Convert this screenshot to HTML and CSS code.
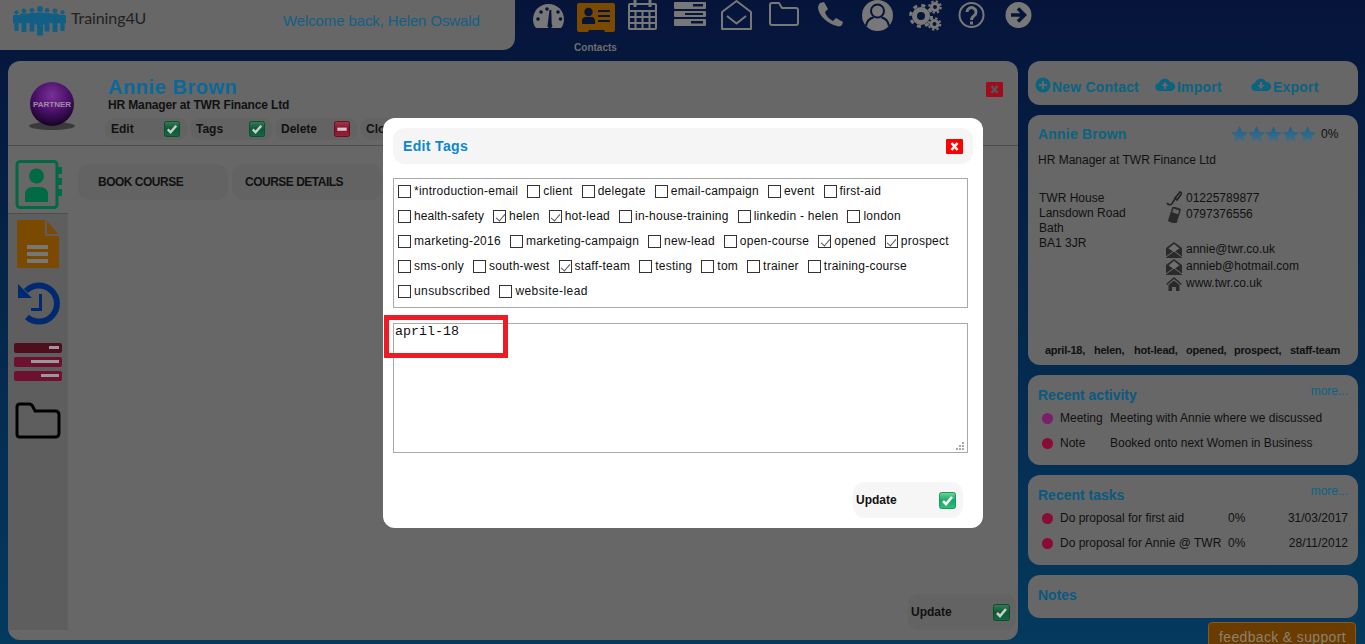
FILE: index.html
```html
<!DOCTYPE html>
<html lang="en">
<head>
<meta charset="utf-8">
<title>Training4U - Contacts</title>
<link rel="stylesheet" href="styles.css">
</head>
<body>
<svg class="defs" width="0" height="0" aria-hidden="true">
  <defs>
    <linearGradient id="g-green" x1="0" y1="0" x2="0" y2="1"><stop offset="0" stop-color="#6fd79a"/><stop offset=".5" stop-color="#16a765"/><stop offset="1" stop-color="#2fc07f"/></linearGradient>
    <linearGradient id="g-green-dim" x1="0" y1="0" x2="0" y2="1"><stop offset="0" stop-color="#3a7a55"/><stop offset=".5" stop-color="#0b5a36"/><stop offset="1" stop-color="#186844"/></linearGradient>
    <linearGradient id="g-red-dim" x1="0" y1="0" x2="0" y2="1"><stop offset="0" stop-color="#a03a4c"/><stop offset=".5" stop-color="#8a1030"/><stop offset="1" stop-color="#96243c"/></linearGradient>
    <linearGradient id="g-star" x1="0" y1="0" x2="0" y2="1"><stop offset="0" stop-color="#17608c"/><stop offset="1" stop-color="#4a6e84"/></linearGradient>
    <radialGradient id="g-ball" cx=".5" cy=".3" r=".7"><stop offset="0" stop-color="#7a3096"/><stop offset=".55" stop-color="#4a1068"/><stop offset="1" stop-color="#150424"/></radialGradient>
    <symbol id="i-ok" viewBox="0 0 17 17"><rect x=".5" y=".5" width="16" height="16" rx="2" fill="url(#g-green)" stroke="#1a9a5e"/><path d="M4 9l3 3 6-7" fill="none" stroke="#fff" stroke-width="2.6"/></symbol>
    <symbol id="i-ok-dim" viewBox="0 0 17 17"><rect x=".5" y=".5" width="16" height="16" rx="2" fill="url(#g-green-dim)" stroke="#0d4d2f"/><path d="M4 9l3 3 6-7" fill="none" stroke="#ccc" stroke-width="2.6"/></symbol>
    <symbol id="i-del-dim" viewBox="0 0 17 17"><rect x=".5" y=".5" width="16" height="16" rx="2" fill="url(#g-red-dim)" stroke="#640c20"/><rect x="3.5" y="7" width="10" height="3.4" fill="#ccc"/></symbol>
    <symbol id="i-x" viewBox="0 0 17 15"><rect width="17" height="15" rx="1" fill="#f00"/><path d="M5.5 4l6 7M11.5 4l-6 7" stroke="#fff" stroke-width="2.6"/></symbol>
    <symbol id="i-x-dim" viewBox="0 0 17 15"><rect width="17" height="15" rx="1" fill="#a00c1c"/><path d="M5.5 4l6 7M11.5 4l-6 7" stroke="#555" stroke-width="2.6"/></symbol>
    <symbol id="i-star" viewBox="0 0 17 17"><path d="M8.5 0l2.5 5.8 6 .6-4.5 4 1.4 6.1-5.4-3.2-5.4 3.2 1.4-6.1L0 6.400l6-.6z" fill="url(#g-star)"/></symbol>
    <symbol id="i-mail" viewBox="0 0 16 16"><path d="M0 6l8-6 8 6v10H0z" fill="#2a2a2a"/><path d="M2.500 6.500L8 2l5.500 4.500L8 10z" fill="#707070"/><path d="M0 15l8-6 8 6" fill="none" stroke="#707070"/></symbol>
    <symbol id="i-person" viewBox="0 0 10 30"><circle cx="5" cy="3.500" r="3" /><path d="M0 8.500q0-1.500 1.500-1.500h7q1.500 0 1.500 1.500V19H8v11H2V19H0z"/></symbol>
  </defs>
</svg>

<header class="topbar">
  <div class="brand">
    <div class="logo">
      <svg class="logo-mark" width="53" height="36" viewBox="0 0 53 36" fill="#125f85" aria-hidden="true">
        <use href="#i-person" x="0" y="8" width="7" height="21"/>
        <use href="#i-person" x="46" y="8" width="7" height="21"/>
        <use href="#i-person" x="7" y="6" width="8" height="24"/>
        <use href="#i-person" x="38" y="6" width="8" height="24"/>
        <use href="#i-person" x="15" y="4" width="8" height="27"/>
        <use href="#i-person" x="30" y="4" width="8" height="27"/>
        <use href="#i-person" x="22" y="2" width="10" height="33"/>
      </svg>
      <span class="logo-text">Training4U</span>
    </div>
    <span class="welcome">Welcome back, Helen Oswald</span>
  </div>
  <nav class="mainnav">
    <div class="nav-item"><svg width="47" height="34" viewBox="0 0 47 34"><path class="ico" d="M23.500 4C14.500 4 8 11 8 19.500c0 3.200 1 6.200 3 8.500h25c2-2.300 3-5.300 3-8.500C39 11 32.500 4 23.500 4z"/><g class="ico-bg"><circle cx="13" cy="19" r="1.800"/><circle cx="16" cy="12" r="1.800"/><circle cx="22" cy="9" r="1.800"/><circle cx="33" cy="12" r="1.800"/><circle cx="35.500" cy="19" r="1.800"/><path d="M24.500 10l1.800 0 .4 14a2.500 2.500 0 1 1-4 .5z"/></g></svg></div>
    <div class="nav-item"><svg width="47" height="34" viewBox="0 0 47 34"><path class="ico-orange" d="M7 3h34q2 0 2 2v25q0 2-2 2H33l-1-2H17l-1 2H7q-2 0-2-2V5q0-2 2-2z"/><g class="ico-bg"><circle cx="16.500" cy="12" r="4.200"/><path d="M10 24v-3q0-4 4-4h5q4 0 4 4v3z"/><path d="M26 10h12v2H26zM26 15h12v2H26zM26 20h12v2H26z"/></g></svg><span class="nav-label">Contacts</span></div>
    <div class="nav-item"><svg width="47" height="34" viewBox="0 0 47 34"><g class="ico-line"><rect x="10" y="4" width="27" height="25" rx="1"/><path d="M10 11h27M10 17h27M10 23h27M16.500 11v18M23.500 11v18M30.500 11v18"/></g><path class="ico" d="M14.500 0h3v7h-3zM29.500 0h3v7h-3z"/></svg></div>
    <div class="nav-item"><svg width="47" height="34" viewBox="0 0 47 34"><path class="ico" d="M9 2h30q1 0 1 1v5q0 1-1 1H9q-1 0-1-1V3q0-1 1-1zM9 11h30q1 0 1 1v4q0 1-1 1H9q-1 0-1-1v-4q0-1 1-1zM9 19h30q1 0 1 1v5q0 1-1 1H9q-1 0-1-1v-5q0-1 1-1z"/><path class="ico-bg" d="M27 4h10v2.500H27zM19 13h18v2H19zM25 21h12v2.500H25z"/></svg></div>
    <div class="nav-item"><svg width="47" height="34" viewBox="0 0 47 34"><path class="ico-line" d="M9 12L23.500 1 38 12v17H9zM14 16l9.500 7.500L33 16"/></svg></div>
    <div class="nav-item"><svg width="47" height="34" viewBox="0 0 47 34"><path class="ico-line" d="M10 5q0-2 2-2h7l3 5h14q2 0 2 2v13q0 2-2 2H12q-2 0-2-2z"/></svg></div>
    <div class="nav-item"><svg width="47" height="34" viewBox="0 0 47 34"><path class="ico" d="M13 3l4-1 4 7-3 3c1 4 4 7 8 9l3-3 7 4-1 3c-1 1-3 2-5 1C21 24 12 16 11 8c0-2 1-4 2-5z"/></svg></div>
    <div class="nav-item"><svg width="47" height="34" viewBox="0 0 47 34"><circle class="ico" cx="23.500" cy="15.500" r="15.500"/><g class="ico-bgline"><circle cx="23.500" cy="11" r="6.500"/><path d="M12 26c1-6 5-8 7.500-8.500M35 26c-1-6-5-8-7.500-8.500"/></g></svg></div>
    <div class="nav-item"><svg width="47" height="34" viewBox="0 0 47 34"><g class="ico-gear"><circle cx="20" cy="16" r="6.500" stroke-width="5"/><circle cx="20" cy="16" r="10.500" stroke-width="3" stroke-dasharray="4 4.250"/><circle cx="34" cy="7" r="3.500" stroke-width="3"/><circle cx="34" cy="7" r="5.800" stroke-width="2" stroke-dasharray="2.400 2.150"/><circle cx="33.500" cy="24" r="3.500" stroke-width="3"/><circle cx="33.500" cy="24" r="5.800" stroke-width="2" stroke-dasharray="2.400 2.150"/></g></svg></div>
    <div class="nav-item"><svg width="47" height="34" viewBox="0 0 47 34"><circle class="ico-line" cx="23.500" cy="15" r="12"/><path class="ico-q" d="M19 12a4.500 4.500 0 1 1 7 3.800c-2 1.400-2.500 2-2.500 4.200M23.500 21.500v3"/></svg></div>
    <div class="nav-item"><svg width="47" height="34" viewBox="0 0 47 34"><circle class="ico" cx="23.500" cy="15" r="13"/><path class="ico-arrow" d="M16 15h13M23 8.500l6.500 6.500-6.500 6.500"/></svg></div>
  </nav>
</header>

<div class="workspace">
  <main class="panel">
    <section class="contact-head">
      <div class="avatar">
        <svg width="50" height="50" viewBox="0 0 50 50" aria-hidden="true"><ellipse cx="25" cy="44" rx="23" ry="4" fill="#3a3a3a"/><circle cx="25" cy="22" r="22" fill="url(#g-ball)"/><text x="25" y="25" class="avatar-text" text-anchor="middle">PARTNER</text></svg>
      </div>
      <div class="head-text">
        <h1 class="name">Annie Brown</h1>
        <p class="role">HR Manager at TWR Finance Ltd</p>
        <div class="actions">
          <div class="btn"><span>Edit</span><svg class="icon16"><use href="#i-ok-dim"/></svg></div>
          <div class="btn"><span>Tags</span><svg class="icon16"><use href="#i-ok-dim"/></svg></div>
          <div class="btn"><span>Delete</span><svg class="icon16"><use href="#i-del-dim"/></svg></div>
          <div class="btn"><span>Close</span><svg class="icon16"><use href="#i-ok-dim"/></svg></div>
        </div>
      </div>
      <svg class="head-close"><use href="#i-x-dim"/></svg>
    </section>
    <section class="contact-body">
      <aside class="sidetabs">
        <div class="sidetab sidetab-active"><svg width="60" height="67" viewBox="0 0 60 67"><rect x="9" y="15.500" width="40" height="46" rx="3" fill="none" stroke="#006a45" stroke-width="3"/><path d="M50 21h4v7h-4zM50 32h4v7h-4zM50 43h4v7h-4z" fill="#006a45"/><circle cx="28.500" cy="30" r="7.500" fill="#006a45"/><path d="M17 56v-7q0-8 8-8h7q8 0 8 8v7z" fill="#006a45"/></svg></div>
        <div class="sidetab"><svg width="60" height="60" viewBox="0 0 60 60"><path d="M11 6h26l14 16v31q0 1-1 1H10q-1 0-1-1V8q0-2 2-2z" fill="#7a4a00"/><path d="M37 5l16 17H37z" fill="#5e5e5e"/><path d="M39 7l11 13H39z" fill="#7a4a00"/><path d="M19 31h21v4H19zM19 38h21v4H19zM19 45h21v4H19z" fill="#777"/></svg></div>
        <div class="sidetab"><svg width="60" height="60" viewBox="0 0 60 60"><path d="M18 17a18 18 0 1 1 1 26" fill="none" stroke="#002a70" stroke-width="6"/><path d="M10 10l14 14H10z" fill="#002a70"/><path d="M31 20h3v17H23v-3h8z" fill="#002a70"/></svg></div>
        <div class="sidetab"><svg width="60" height="60" viewBox="0 0 60 60"><g fill="#6e1030"><rect x="6" y="9" width="48" height="10" rx="2" fill="#4e0e1e"/><rect x="6" y="23" width="48" height="10" rx="2"/><rect x="6" y="37" width="48" height="10" rx="2"/></g><g fill="#999"><rect x="41" y="12" width="10" height="3"/><rect x="23" y="26" width="28" height="3"/><rect x="33" y="40" width="18" height="3"/></g></svg></div>
        <div class="sidetab"><svg width="60" height="60" viewBox="0 0 60 60"><path d="M9 13q0-3 3-3h9q3 0 4 3l2 4h20q4 0 4 4v18q0 4-4 4H12q-3 0-3-3z" fill="none" stroke="#000" stroke-width="3"/></svg></div>
      </aside>
      <div class="tab-area">
        <div class="tabs">
          <div class="tab">BOOK COURSE</div>
          <div class="tab tab-second">COURSE DETAILS</div>
        </div>
        <div class="tab-footer">
          <div class="btn btn-update"><span>Update</span><svg class="icon17"><use href="#i-ok-dim"/></svg></div>
        </div>
      </div>
    </section>
  </main>

  <aside class="rightcol">
    <div class="card card-links">
      <div class="link-item link-new"><svg width="16" height="16" viewBox="0 0 16 16"><circle cx="8" cy="8" r="7.500" class="teal"/><path d="M8 4v8M4 8h8" stroke="#676767" stroke-width="2.200"/></svg><span>New Contact</span></div>
      <div class="link-item link-import"><svg width="20" height="16" viewBox="0 0 20 16"><path class="teal" d="M5 14a4 4 0 0 1-1-8 6 6 0 0 1 11-1 4.500 4.500 0 0 1 1 9z"/><path d="M10 5l3.500 4H11v3H9V9H6.500z" fill="#676767"/></svg><span>Import</span></div>
      <div class="link-item link-export"><svg width="20" height="16" viewBox="0 0 20 16"><path class="teal" d="M5 14a4 4 0 0 1-1-8 6 6 0 0 1 11-1 4.500 4.500 0 0 1 1 9z"/><path d="M10 12L6.500 8H9V5h2v3h2.500z" fill="#676767"/></svg><span>Export</span></div>
    </div>

    <div class="card card-contact">
      <div class="contact-title">
        <h2 class="card-name">Annie Brown</h2>
        <div class="stars">
          <svg class="star"><use href="#i-star"/></svg><svg class="star"><use href="#i-star"/></svg><svg class="star"><use href="#i-star"/></svg><svg class="star"><use href="#i-star"/></svg><svg class="star"><use href="#i-star"/></svg>
        </div>
        <span class="pct">0%</span>
      </div>
      <p class="card-role">HR Manager at TWR Finance Ltd</p>
      <div class="contact-grid">
        <address class="addr">TWR House<br>Lansdown Road<br>Bath<br>BA1 3JR</address>
        <div class="comm">
          <div class="comm-row"><svg class="comm-ico" viewBox="0 0 16 16"><path d="M1 12c2 3 5 2 6-1l3-5M9 7l5-6 2 1-5 7z" fill="none" stroke="#222" stroke-width="1.600"/></svg>01225789877</div>
          <div class="comm-row"><svg class="comm-ico" viewBox="0 0 16 16"><g transform="rotate(18 8 8)"><rect x="4" y="0" width="9" height="16" rx="1.500" fill="#2a2a2a"/><rect x="5.500" y="2" width="6" height="4" fill="#666"/></g></svg>0797376556</div>
          <div class="comm-row comm-gap"><svg class="comm-ico"><use href="#i-mail"/></svg>annie@twr.co.uk</div>
          <div class="comm-row"><svg class="comm-ico"><use href="#i-mail"/></svg>annieb@hotmail.com</div>
          <div class="comm-row"><svg class="comm-ico" viewBox="0 0 16 16"><path d="M0 8l8-7 8 7-1 1-7-6-7 6z" fill="#2a2a2a"/><path d="M2.500 9L8 4.500 13.500 9v6H10v-4H6v4H2.500z" fill="#2a2a2a"/></svg>www.twr.co.uk</div>
        </div>
      </div>
      <div class="tagline"><span>april-18,</span><span>helen,</span><span>hot-lead,</span><span>opened,</span><span>prospect,</span><span>staff-team</span></div>
    </div>

    <div class="card card-list">
      <div class="list-head"><h2 class="card-title">Recent activity</h2><span class="more">more...</span></div>
      <div class="activity"><i class="dot dot-meeting"></i><span>Meeting</span><span>Meeting with Annie where we discussed</span></div>
      <div class="activity"><i class="dot"></i><span>Note</span><span>Booked onto next Women in Business</span></div>
    </div>

    <div class="card card-list">
      <div class="list-head"><h2 class="card-title">Recent tasks</h2><span class="more">more...</span></div>
      <div class="task"><i class="dot"></i><span>Do proposal for first aid</span><span>0%</span><span class="date">31/03/2017</span></div>
      <div class="task"><i class="dot"></i><span>Do proposal for Annie @ TWR</span><span>0%</span><span class="date">28/11/2012</span></div>
    </div>

    <div class="card card-notes"><h2 class="card-title">Notes</h2></div>
    <div class="feedback">feedback &amp; support</div>
  </aside>
</div>

<div class="modal" role="dialog" aria-label="Edit Tags">
  <div class="modal-title">
    <h2>Edit Tags</h2>
    <svg class="modal-close"><use href="#i-x"/></svg>
  </div>
  <div class="tagbox">
    <div class="tagrow">
      <label class="tag"><input type="checkbox">*introduction-email</label>
      <label class="tag"><input type="checkbox">client</label>
      <label class="tag"><input type="checkbox">delegate</label>
      <label class="tag"><input type="checkbox">email-campaign</label>
      <label class="tag"><input type="checkbox">event</label>
      <label class="tag"><input type="checkbox">first-aid</label>
    </div>
    <div class="tagrow">
      <label class="tag"><input type="checkbox">health-safety</label>
      <label class="tag"><input type="checkbox" checked>helen</label>
      <label class="tag"><input type="checkbox" checked>hot-lead</label>
      <label class="tag"><input type="checkbox">in-house-training</label>
      <label class="tag"><input type="checkbox">linkedin - helen</label>
      <label class="tag"><input type="checkbox">london</label>
    </div>
    <div class="tagrow">
      <label class="tag"><input type="checkbox">marketing-2016</label>
      <label class="tag"><input type="checkbox">marketing-campaign</label>
      <label class="tag"><input type="checkbox">new-lead</label>
      <label class="tag"><input type="checkbox">open-course</label>
      <label class="tag"><input type="checkbox" checked>opened</label>
      <label class="tag"><input type="checkbox" checked>prospect</label>
    </div>
    <div class="tagrow">
      <label class="tag"><input type="checkbox">sms-only</label>
      <label class="tag"><input type="checkbox">south-west</label>
      <label class="tag"><input type="checkbox" checked>staff-team</label>
      <label class="tag"><input type="checkbox">testing</label>
      <label class="tag"><input type="checkbox">tom</label>
      <label class="tag"><input type="checkbox">trainer</label>
      <label class="tag"><input type="checkbox">training-course</label>
    </div>
    <div class="tagrow">
      <label class="tag"><input type="checkbox">unsubscribed</label>
      <label class="tag"><input type="checkbox">website-lead</label>
    </div>
  </div>
  <textarea class="tagtext">april-18</textarea>
  <svg class="grip" width="8" height="8" viewBox="0 0 8 8" aria-hidden="true"><path d="M6 0h2v2H6zM3 3h2v2H3zM6 3h2v2H6zM0 6h2v2H0zM3 6h2v2H3zM6 6h2v2H6z" fill="#aaa"/></svg>
  <div class="callout"></div>
  <div class="modal-foot">
    <div class="btn btn-modal"><span>Update</span><svg class="icon17"><use href="#i-ok"/></svg></div>
  </div>
</div>
</body>
</html>
```
FILE: styles.css
```css
* { box-sizing: border-box; }
html, body { margin: 0; height: 644px; overflow: hidden; }
body {
  font: 12px/15px "Liberation Sans", Arial, sans-serif;
  color: #111;
  background: linear-gradient(#06143a, #043a5e);
  position: relative;
}
h1, h2, p, address { margin: 0; font-style: normal; }
.defs { position: absolute; }

/* top bar */
.topbar { display: flex; height: 61px; }
.brand {
  width: 515px; height: 50px;
  display: flex; align-items: flex-start;
  background: #676767;
  border-bottom-right-radius: 12px;
  padding-left: 13px;
}
.logo { display: flex; align-items: center; width: 270px; height: 36px; margin-top: 2px; }
.logo-text { font: 400 16px/20px Lato, sans-serif; color: #222; margin-left: 5px; margin-top: -4px; letter-spacing: -.1px; }
.welcome { font-size: 15px; line-height: 18px; margin-top: 12px; color: #145f85; letter-spacing: -.12px; }
.mainnav { display: flex; margin-left: 10px; }
.nav-item { width: 47px; height: 50px; position: relative; text-align: center; }
.nav-item svg { display: block; overflow: visible; }
.nav-label { display: block; font-size: 10px; font-weight: bold; line-height: 12px; margin: 8px -10px 0; color: #6e6e6e; }
.ico { fill: #787878; }
.ico-orange { fill: #7a4a00; }
.ico-bg { fill: #06143a; }
.ico-line { fill: none; stroke: #787878; stroke-width: 2; stroke-linejoin: round; }
.ico-bgline { fill: none; stroke: #06143a; stroke-width: 2; }
.ico-gear { fill: none; stroke: #787878; }
.ico-q { fill: none; stroke: #787878; stroke-width: 3; }
.ico-arrow { fill: none; stroke: #06143a; stroke-width: 3.500; }

/* workspace */
.workspace { display: flex; gap: 10px; padding: 0 7px 0 8px; }
.panel {
  width: 1010px; height: 579px;
  background: #676767; border-radius: 12px;
  display: flex; flex-direction: column; overflow: hidden;
}
.contact-head { display: flex; height: 85px; border-bottom: 1px solid #4d4d4d; padding-top: 14px; position: relative; }
.avatar { width: 100px; padding: 7px 0 0 19px; }
.avatar svg { display: block; }
.avatar-text { font: bold 8px "Liberation Sans", sans-serif; fill: #a08aa8; }
.name { font-size: 20px; line-height: 24px; font-weight: bold; color: #0b689a; letter-spacing: .55px; }
.role { font-weight: bold; line-height: 14px; margin-top: -1px; color: #111; letter-spacing: -.14px; }
.actions { display: flex; gap: 2px; margin-top: 6px; margin-left: -3px; }
.btn { display: flex; align-items: center; justify-content: space-between; font-weight: bold; border-radius: 11px; background: #636363; }
.actions .btn { width: 83px; height: 22px; padding: 0 8px 0 6px; }
.icon16 { width: 16px; height: 16px; display: block; }
.icon17 { width: 17px; height: 17px; display: block; }
.head-close { position: absolute; top: 21px; right: 15px; width: 17px; height: 15px; }

.contact-body { flex: 1; display: flex; }
.sidetabs { width: 60px; margin-bottom: 10px; background: #5e5e5e; display: flex; flex-direction: column; }
.sidetab { height: 60px; }
.sidetab svg { display: block; }
.sidetab-active { height: 68px; background: #676767; border-bottom: 1px solid #4d4d4d; }
.tab-area { flex: 1; display: flex; flex-direction: column; padding: 18px 2px 10px 10px; }
.tabs { display: flex; gap: 4px; flex: 1; }
.tab { width: 150px; height: 36px; border-radius: 12px; background: #636363; padding-left: 20px; font-weight: bold; font-size: 12px; line-height: 36px; letter-spacing: -.5px; }
.tab-second { padding-left: 13px; }
.tab-footer { display: flex; justify-content: flex-end; }
.btn-update { width: 108px; height: 36px; padding: 0 6px 0 3px; }

/* right column */
.rightcol { width: 330px; display: flex; flex-direction: column; }
.card { background: #676767; border-radius: 12px; margin-bottom: 10px; }
.teal { fill: #0a6480; }
.card-links { height: 44px; display: flex; padding-top: 16px; }
.link-item { display: flex; align-items: flex-start; font-size: 14px; font-weight: bold; line-height: 20px; color: #0a6480; letter-spacing: .2px; }
.link-item svg { display: block; margin-right: 2px; }
.link-new { width: 120px; margin-left: 7px; }
.link-new svg { margin-right: 1px; }
.link-import { width: 96px; }
.card-contact { height: 250px; padding: 11px 10px 0; position: relative; }
.contact-title { display: flex; align-items: center; height: 16px; }
.card-name { font-size: 14px; line-height: 16px; font-weight: bold; color: #0a6480; flex: 1; letter-spacing: .2px; }
.stars { display: flex; width: 90px; }
.star { width: 17px; height: 17px; display: block; }
.pct { width: 27px; }
.card-role { margin-top: 11px; }
.contact-grid { display: flex; margin-top: 22px; padding-left: 1px; }
.addr { width: 127px; padding-top: 1px; }
.comm-row { display: flex; align-items: center; height: 17px; }
.comm-row:nth-child(2) { margin-top: -1px; }
.comm-gap { margin-top: 18px; }
.comm-ico { width: 16px; height: 16px; margin-right: 4px; display: block; flex: none; }
.tagline { position: absolute; left: 17px; right: 20px; bottom: 7px; display: grid; grid-template-columns: 49px 40px 52px 48px 56px auto; font-size: 11px; font-weight: bold; letter-spacing: -.25px; white-space: nowrap; }

.card-list { height: 90px; padding: 11px 10px 0; }
.list-head { display: flex; justify-content: space-between; height: 18px; margin-bottom: 2px; }
.card-title { font-size: 14px; line-height: 18px; font-weight: bold; color: #0a5a80; }
.more { color: #0a6488; margin-top: -2px; }
.activity, .task { display: grid; align-items: center; height: 25px; }
.activity { grid-template-columns: 22px 50px 1fr; }
.task { grid-template-columns: 22px 168px 40px 1fr; }
.dot { display: block; width: 11px; height: 11px; border-radius: 50%; margin-left: 4px; background: #8a0a38; }
.dot-meeting { background: #7a2068; }
.date { text-align: right; }
.card-notes { height: 43px; margin-bottom: 4px; padding: 11px 10px 0; }
.feedback {
  width: 148px; height: 30px; margin-left: 180px;
  background: #6a3c00; border: 1px solid #8a5818; border-radius: 4px 4px 0 0;
  padding: 4px 0 0 10px; font-size: 14px; line-height: 20px; color: #8a8270; letter-spacing: .35px;
}

/* modal */
.modal {
  position: absolute; left: 383px; top: 118px; width: 600px; height: 410px;
  background: #fff; border-radius: 12px; padding: 10px;
  color: #111;
}
.modal-title { height: 36px; width: 580px; background: #f5f5f5; border-radius: 12px; display: flex; align-items: center; justify-content: space-between; padding: 0 10px; }
.modal-title h2 { font-size: 14px; line-height: 18px; font-weight: bold; color: #0a88d0; letter-spacing: .35px; }
.modal-close { width: 17px; height: 15px; display: block; }
.tagbox { width: 575px; height: 130px; margin-top: 14px; border: 1px solid #aaa; padding: 0 4px; }
.tagrow { display: flex; height: 25px; align-items: center; gap: 9px; letter-spacing: .25px; }
.tagrow:last-child { letter-spacing: .42px; }
.tagrow:nth-child(2) .tag:first-child { letter-spacing: .1px; }
.tag { display: flex; align-items: center; }
.tag input {
  appearance: none; margin: 0 3px 0 0; width: 13px; height: 13px;
  border: 1px solid #333; background: #fff; position: relative; flex: none;
}
.tag input:checked::after {
  content: ""; position: absolute; left: 3.500px; top: .5px; width: 4px; height: 8px;
  border: solid #555; border-width: 0 1.500px 1.500px 0; transform: rotate(40deg);
}
.tagtext {
  display: block; width: 575px; height: 130px; margin: 15px 0 0;
  border: 1px solid #aaa; padding: 0 1px; outline: none; resize: none;
  font: 13.330px/15px "Liberation Mono", monospace; color: #111; background: #fff;
}
.grip { position: absolute; left: 573px; top: 324px; }
.callout { position: absolute; left: 1px; top: 197px; width: 124px; height: 43px; border: 5px solid #ed1c24; }
.modal-foot { display: flex; justify-content: flex-end; padding: 29px 10px 0 0; }
.btn-modal { width: 110px; height: 36px; padding: 0 7px 0 3px; background: #f6f6f6; border-radius: 12px; color: #111; }
```
